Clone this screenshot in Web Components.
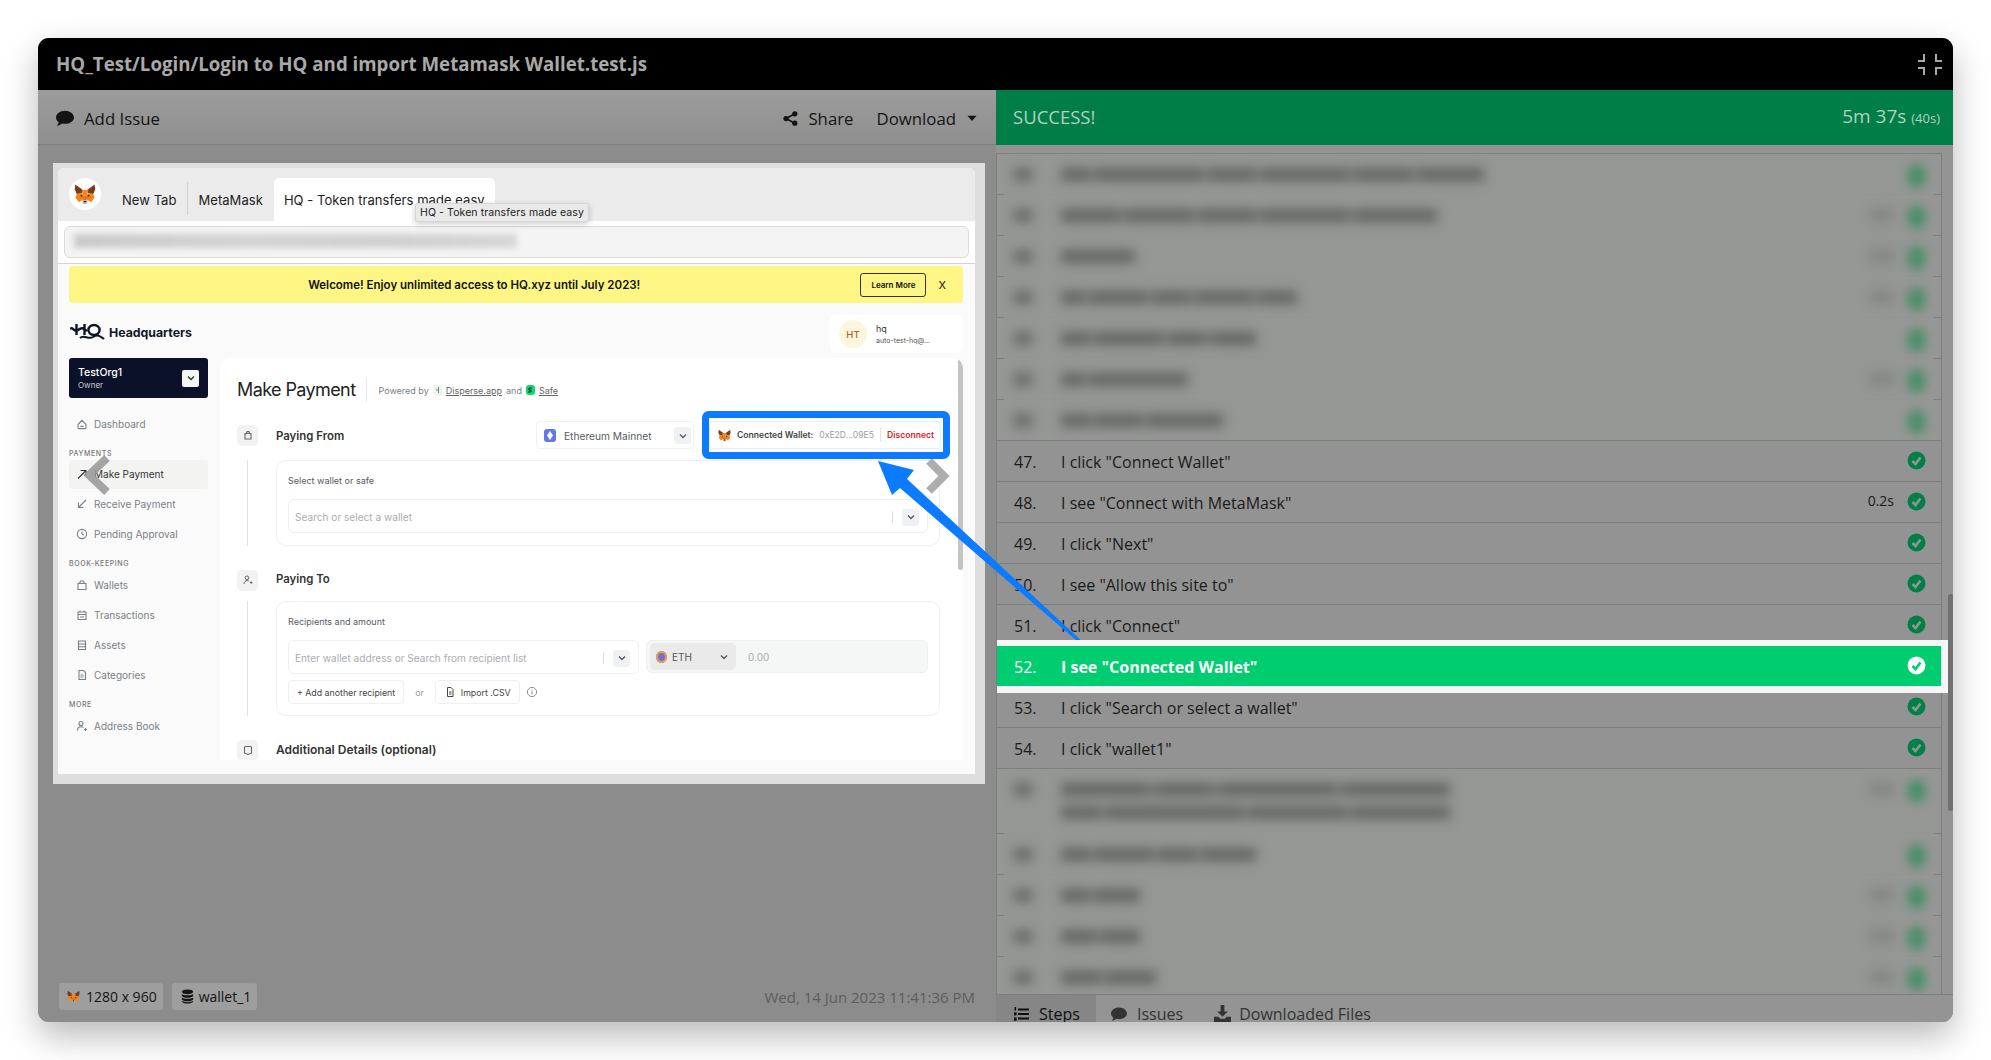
<!DOCTYPE html>
<html lang="en">
<head>
<meta charset="utf-8">
<title>HQ_Test run</title>
<style>
html, body { margin: 0; background: #fff; }
body { padding: 38px 38px 0; height: 1022px; overflow: hidden; font-family: "Open Sans", sans-serif; }
</style>
</head>
<body>
<run-window>
    <span slot="title">HQ_Test/Login/Login to HQ and import Metamask Wallet.test.js</span>
    <player-pane slot="left">
        <shot-browser>
            <hq-page></hq-page>
        </shot-browser>
    </player-pane>
    <steps-pane slot="right">
        <step-row blurred solid bars="30 110 50 90 60 68"></step-row>
        <step-row blurred bars="60 70 60 90 84" time></step-row>
        <step-row blurred bars="74" time></step-row>
        <step-row blurred bars="24 60 40 60 40" time></step-row>
        <step-row blurred bars="30 70 40 46"></step-row>
        <step-row blurred bars="24 100" time></step-row>
        <step-row blurred bars="30 50 76"></step-row>
        <step-row num="47." solid>I click "Connect Wallet"</step-row>
        <step-row num="48." solid time="0.2s">I see "Connect with MetaMask"</step-row>
        <step-row num="49." solid>I click "Next"</step-row>
        <step-row num="50." solid>I see "Allow this site to"</step-row>
        <step-row num="51." solid>I click "Connect"</step-row>
        <step-row num="52." solid current>I see "Connected Wallet"</step-row>
        <step-row num="53." solid>I click "Search or select a wallet"</step-row>
        <step-row num="54." solid>I click "wallet1"</step-row>
        <step-row blurred solid tall bars="90 60 120 110 40 140 100 100" time></step-row>
        <step-row blurred bars="30 60 40 56"></step-row>
        <step-row blurred bars="30 46" time></step-row>
        <step-row blurred bars="36 40" time></step-row>
        <step-row blurred bars="40 52" time></step-row>
    </steps-pane>
</run-window>

<script>
const ICONS = {
    comment: '<path fill="currentColor" d="M8 1.5C3.6 1.5 0 4.2 0 7.5c0 1.7.9 3.1 2.4 4.2-.2 1-.8 2.2-1.8 3 2 0 3.6-.8 4.7-1.9.8.2 1.8.4 2.7.4 4.4 0 8-2.6 8-5.7S12.4 1.5 8 1.5z"/>',
    share: '<g fill="currentColor"><circle cx="12.6" cy="3" r="2.8"/><circle cx="12.6" cy="13" r="2.8"/><circle cx="3.2" cy="8" r="2.8"/></g><path d="M12.6 3 3.2 8l9.4 5" fill="none" stroke="currentColor" stroke-width="1.8"/>',
    caret: '<path fill="currentColor" d="M2 5h12l-6 7z"/>',
    db: '<g fill="currentColor"><ellipse cx="8" cy="3" rx="6" ry="2.6"/><path d="M2 5.2c1 2 11 2 12 0v2.2c-1 2.6-11 2.6-12 0zM2 9c1 2 11 2 12 0v2.2c-1 2.6-11 2.6-12 0zM2 12.6c1 2 11 2 12 0v.6c-1 3-11 3-12 0z"/></g>',
    list: '<g fill="currentColor"><rect x="5" y="2.5" width="11" height="2"/><rect x="5" y="7" width="11" height="2"/><rect x="5" y="11.5" width="11" height="2"/><rect x="1.5" y="1" width="1.6" height="3.6"/><rect x="1" y="6.4" width="2.6" height="3"/><rect x="1" y="11.4" width="2.6" height="3.4"/></g>',
    download: '<path fill="currentColor" d="M6.2 0h3.6v6H13L8 11 3 6h3.2zM0 11h4l2 2h4l2-2h4v5H0z"/>',
    home: '<path fill="none" stroke="currentColor" stroke-width="1.1" d="M2 6.5 6 2.4l4 4.1v3.2c0 .5-.4.9-.9.9H2.900c-.5 0-.9-.4-.9-.9zM4.400 8.400h3.200"/>',
    out: '<path fill="none" stroke="currentColor" stroke-width="1.100" d="M2 10.500 10 2.500M4.500 2.500H10V8"/>',
    in: '<path fill="none" stroke="currentColor" stroke-width="1.100" d="M10 2 2.500 9.500M2.500 4.500v5H7.500"/>',
    clock: '<circle cx="6" cy="6" r="4.600" fill="none" stroke="currentColor" stroke-width="1.100"/><path d="M6 3.400V6l1.800 1.200" fill="none" stroke="currentColor" stroke-width="1.100"/>',
    wallet: '<path fill="none" stroke="currentColor" stroke-width="1.100" d="M2 4.500h8v6H2zM3.500 4.500 4.500 2h3l1 2.500"/>',
    cal: '<path fill="none" stroke="currentColor" stroke-width="1.100" d="M2 3h8v7.500H2zM2 5.500h8M4 1.500V3M8 1.500V3M4 8h4"/>',
    bank: '<path fill="none" stroke="currentColor" stroke-width="1.100" d="M2.500 2h7v8.500h-7zM2.500 5h7M2.500 7.800h7"/>',
    doc: '<path fill="none" stroke="currentColor" stroke-width="1.100" d="M3 1.500h4.500L9.500 3.500v7H3zM4.500 6h3M4.500 8h3"/>',
    book: '<circle cx="5" cy="3.500" r="2" fill="none" stroke="currentColor" stroke-width="1.100"/><path fill="none" stroke="currentColor" stroke-width="1.100" d="M1.500 10.500c0-2.500 1.500-3.800 3.500-3.800 1 0 1.800.3 2.400.8M8 9.500h3M9.500 8v3"/>',
    chev: '<path fill="none" stroke="currentColor" stroke-width="1.400" d="M3 4.500 6 7.500 9 4.500"/>',
    info: '<circle cx="6" cy="6" r="4.600" fill="none" stroke="currentColor"/><path d="M6 5.200V8.600M6 3.400v1" stroke="currentColor" fill="none"/>',
    bag: '<path fill="none" stroke="currentColor" stroke-width="1.100" d="M3 4.500h6v5.500H3zM4.500 4.500 5 2.500h2l.5 2"/>',
    user: '<circle cx="5" cy="3.800" r="1.800" fill="none" stroke="currentColor"/><path fill="none" stroke="currentColor" d="M2 10c0-2 1.300-3.400 3-3.400 1 0 1.500.3 2 .7M8 8.500h2.500M9.200 7.300v2.500"/>',
    note: '<path fill="none" stroke="currentColor" stroke-width="1.100" d="M3.500 2.500h5c.5 0 1 .4 1 1v5.500L6 10.500 2.500 9V3.500c0-.6.500-1 1-1z"/>',
    csv: '<path fill="none" stroke="currentColor" d="M3.500 1.500H7l2 2V10.500H3.500zM5 6h2.500M5 8h2.500"/>'
}

class UiIcon extends HTMLElement {
    constructor() {
        super()
        this.attachShadow({mode: 'open'})
        const size = this.getAttribute('size') || 16
        const box = this.getAttribute('box') || 16
        this.shadowRoot.innerHTML = `
        <style>
        :host { display: inline-flex; flex: none; width: ${size}px; height: ${size}px; }
        svg { display: block; width: 100%; height: 100%; }
        </style>
        <svg viewBox="0 0 ${box} ${box}">${ICONS[this.getAttribute('name')]}</svg>`
    }
}
customElements.define('ui-icon', UiIcon)

class FoxIcon extends HTMLElement {
    constructor() {
        super()
        this.attachShadow({mode: 'open'})
        const size = this.getAttribute('size') || 16
        this.shadowRoot.innerHTML = `
        <style>
        :host { display: inline-flex; flex: none; width: ${size}px; height: ${size}px; }
        svg { display: block; width: 100%; height: 100%; }
        </style>
        <svg viewBox="0 0 32 30">
            <polygon fill="#763d16" points="2,1 13,9 11,14 4,15 1,8"/>
            <polygon fill="#763d16" points="30,1 19,9 21,14 28,15 31,8"/>
            <polygon fill="#f6851b" points="11,9 21,9 19,17 13,17"/>
            <polygon fill="#f6851b" points="4,15 11,14 13,17 12,24 7,27 2,20"/>
            <polygon fill="#f6851b" points="28,15 21,14 19,17 20,24 25,27 30,20"/>
            <polygon fill="#e2761b" points="11,14 13,17 13,22 7,20"/>
            <polygon fill="#e2761b" points="21,14 19,17 19,22 25,20"/>
            <polygon fill="#233447" points="9,17 12,16 12,19"/>
            <polygon fill="#233447" points="23,17 20,16 20,19"/>
            <polygon fill="#e4761b" points="13,17 19,17 20,24 12,24"/>
            <polygon fill="#c0ad9e" points="12,24 20,24 19,29 13,29"/>
            <polygon fill="#161616" points="14,25 18,25 17,27 15,27"/>
        </svg>`
    }
}
customElements.define('fox-icon', FoxIcon)

const windowTemplate = document.createElement('template')
windowTemplate.innerHTML = `
<style>
:host { display: block; position: relative; width: 1915px; height: 984px; box-shadow: 0 14px 34px rgba(0,0,0,.28); border-radius: 11px; }
.frame { display: grid; grid-template-rows: 52px 1fr; height: 100%; border-radius: 11px; overflow: hidden; background: #8c8c8c; }
header { display: flex; align-items: center; justify-content: space-between; box-sizing: border-box; padding: 0 11px 2px 18px; background: #000; color: #a9a9a9; font: 700 18.700px "Open Sans", sans-serif; }
header svg { margin-top: 2px; }
.split { display: grid; grid-template-columns: 958px 1fr; min-height: 0; }
svg.marks { position: absolute; left: 0; top: 0; pointer-events: none; }
</style>
<div class="frame">
    <header>
        <slot name="title"></slot>
        <svg width="24" height="21" viewBox="0 0 24 21" fill="none" stroke="#a9a9a9" stroke-width="2"><path d="M6 0v7H0M18 0v7h6M6 21v-7H0M18 21v-7h6"/></svg>
    </header>
    <div class="split">
        <slot name="left"></slot>
        <slot name="right"></slot>
    </div>
</div>
<svg class="marks" width="1915" height="984" viewBox="38 38 1915 984">
    <polyline points="107,458 89,475 107,492" fill="none" stroke="#9b9b9b" stroke-width="8" opacity=".9"/>
    <polyline points="929,461 944,476 929,491" fill="none" stroke="#adadad" stroke-width="8"/>
    <rect x="705.500" y="414.500" width="241" height="41" rx="3" fill="none" stroke="#0d7bff" stroke-width="7"/>
    <polygon fill="#0d7bff" points="878,461 914,470 907,479 1086,645 1084,647 900,488 892,495"/>
</svg>
`
class RunWindow extends HTMLElement {
    constructor() {
        super()
        this.attachShadow({mode: 'open'})
        this.shadowRoot.appendChild(windowTemplate.content.cloneNode(true))
    }
}
customElements.define('run-window', RunWindow)

const playerTemplate = document.createElement('template')
playerTemplate.innerHTML = `
<style>
:host { display: flex; flex-direction: column; min-height: 0; font: 16.800px "Open Sans", sans-serif; color: #141414; background: #8c8c8c; }
.bar { flex: none; height: 55px; box-sizing: border-box; display: flex; align-items: center; padding: 2px 18px 0 18px; gap: 10px; background: linear-gradient(#9c9c9c, #8f8f8f); border-bottom: 1px solid #808080; }
.grow { flex: 1; }
.stage { flex: none; margin: 18px 11px 0 15px; }
.foot { margin-top: auto; display: flex; align-items: center; gap: 9px; padding: 0 21px 12px 21px; font-size: 14px; }
.chip { display: flex; align-items: center; gap: 6px; height: 27px; padding: 0 8px; background: #9e9e9e; border-radius: 3px; }
.chip.w { gap: 4px; padding-right: 6px; }
.chip.m { padding-right: 6px; }
.date { margin-left: auto; color: #5c5c5c; font-size: 15px; }
</style>
<div class="bar">
    <ui-icon name="comment" size="18"></ui-icon><span>Add Issue</span>
    <span class="grow"></span>
    <ui-icon name="share" size="15"></ui-icon><span>Share</span>
    <span style="width:3px"></span>
    <span>Download</span><ui-icon name="caret" size="12"></ui-icon>
</div>
<div class="stage"><slot></slot></div>
<div class="foot">
    <span class="chip m"><fox-icon size="13"></fox-icon>1280 x 960</span>
    <span class="chip w"><ui-icon name="db" size="15"></ui-icon>wallet_1</span>
    <span class="date">Wed, 14 Jun 2023 11:41:36 PM</span>
</div>
`
class PlayerPane extends HTMLElement {
    constructor() {
        super()
        this.attachShadow({mode: 'open'})
        this.shadowRoot.appendChild(playerTemplate.content.cloneNode(true))
    }
}
customElements.define('player-pane', PlayerPane)

const browserTemplate = document.createElement('template')
browserTemplate.innerHTML = `
<style>
:host { display: block; width: 932px; height: 621px; box-sizing: border-box; padding: 5px 10px 10px 5px; background: #dedede; font-family: Inter, sans-serif; color: #222; }
.inner { position: relative; height: 606px; display: flex; flex-direction: column; overflow: hidden; background: #fff; border-radius: 6px 6px 0 0; }
.tabs { flex: none; height: 53px; display: flex; align-items: flex-end; padding-left: 11px; background: #ebebeb; font-size: 13px; letter-spacing: .05px; }
.logo { align-self: flex-start; margin-top: 10px; width: 32px; height: 32px; border-radius: 50%; background: #fff; display: flex; align-items: center; justify-content: center; }
.tab { height: 43px; box-sizing: border-box; display: flex; align-items: center; padding: 0 11px; position: relative; }
.tab.first { margin-left: 10px; }
.tab + .tab::before { content: ""; position: absolute; left: 0; top: 4px; bottom: 6px; width: 1px; background: #cfcfcf; }
.tab.on { width: 221px; background: #fff; border-radius: 5px 5px 0 0; white-space: nowrap; padding-left: 10px; }
.tab.on::before { display: none; }
.url { flex: none; height: 43px; box-sizing: border-box; padding: 5px 6px; border-bottom: 1px solid #d2d2d2; }
.field { height: 32px; box-sizing: border-box; padding: 7px 9px; border: 1px solid #dcdcdc; border-radius: 6px; background: #f4f4f4; }
.smear { width: 443px; height: 14px; background: linear-gradient(90deg, #c9c9c9, #d3d3d3 40%, #cfcfcf 70%, #d6d6d6); filter: blur(3px); }
.tip { position: absolute; left: 357px; top: 35px; padding: 2px 4px; background: #e9e9e9; border: 1px solid #d6d6d6; border-radius: 2px; box-shadow: 0 2px 6px rgba(0,0,0,.2); font-size: 10.500px; letter-spacing: .1px; white-space: nowrap; }
.page { flex: 1; min-height: 0; }
</style>
<div class="inner">
    <div class="tabs">
        <span class="logo"><fox-icon size="22"></fox-icon></span>
        <span class="tab first">New Tab</span>
        <span class="tab">MetaMask</span>
        <span class="tab on">HQ - Token transfers made easy</span>
    </div>
    <div class="url"><div class="field"><div class="smear"></div></div></div>
    <div class="page"><slot></slot></div>
    <div class="tip">HQ - Token transfers made easy</div>
</div>
`
class ShotBrowser extends HTMLElement {
    constructor() {
        super()
        this.attachShadow({mode: 'open'})
        this.shadowRoot.appendChild(browserTemplate.content.cloneNode(true))
    }
}
customElements.define('shot-browser', ShotBrowser)

class NavItem extends HTMLElement {
    constructor() {
        super()
        this.attachShadow({mode: 'open'})
        const on = this.hasAttribute('active')
        this.shadowRoot.innerHTML = `
        <style>
        :host { display: flex; align-items: center; gap: 6px; box-sizing: border-box; height: ${on ? 29 : 30}px; padding: 0 0 1px 7px; font-size: 10px; color: ${on ? '#333' : '#7b7f85'}; border-radius: 4px; background: ${on ? '#f3f3f1' : 'transparent'}; }
        </style>
        <ui-icon name="${this.getAttribute('icon')}" size="12" box="12"></ui-icon><slot></slot>`
    }
}
customElements.define('nav-item', NavItem)

class PaySection extends HTMLElement {
    constructor() {
        super()
        this.attachShadow({mode: 'open'})
        const gap = this.getAttribute('gap') || 7
        const lift = Number(this.getAttribute('lift') || 0)
        const fs = this.getAttribute('fs') || 11.4
        this.shadowRoot.innerHTML = `
        <style>
        :host { display: block; margin-top: 20px; }
        .head { display: flex; align-items: center; height: 28px; }
        .badge { width: 21px; height: 21px; border-radius: 5px; background: #f2f2f2; color: #666; display: flex; align-items: center; justify-content: center; margin-right: 18px; }
        h4 { margin: ${-lift}px 0 0; font: 600 ${fs}px Inter, sans-serif; color: #333; }
        .right { margin-left: auto; display: flex; gap: 16px; align-items: center; }
        .body { display: grid; grid-template-columns: 39px 1fr; margin-top: ${gap}px; }
        .rail { width: 1px; background: #dfe2e6; margin-left: 10px; }
        </style>
        <div class="head">
            <span class="badge"><ui-icon name="${this.getAttribute('icon')}" size="12" box="12"></ui-icon></span>
            <h4>${this.getAttribute('heading')}</h4>
            <div class="right"><slot name="right"></slot></div>
        </div>
        <div class="body"><div class="rail"></div><slot></slot></div>`
    }
}
customElements.define('pay-section', PaySection)

class FormCard extends HTMLElement {
    constructor() {
        super()
        this.attachShadow({mode: 'open'})
        this.shadowRoot.innerHTML = `
        <style>
        :host { display: block; box-sizing: border-box; height: ${this.getAttribute('h')}px; padding: 14px 11px 0; border: 1px solid #eceef0; border-radius: 10px; background: #fff; }
        .label { font-size: 9px; color: #555b63; height: 12px; line-height: 12px; margin-bottom: 12px; }
        </style>
        <div class="label">${this.getAttribute('label')}</div>
        <slot></slot>`
    }
}
customElements.define('form-card', FormCard)

class PickField extends HTMLElement {
    constructor() {
        super()
        this.attachShadow({mode: 'open'})
        this.shadowRoot.innerHTML = `
        <style>
        :host { display: flex; align-items: center; box-sizing: border-box; height: 34px; padding: 2px 8px 0 6px; border: 1px solid #edeff1; border-radius: 6px; font-size: 10.100px; color: #a9adb2; white-space: nowrap; }
        .grow { flex: 1; }
        .sep { width: 1px; height: 12px; background: #dcdee0; margin-right: 9px; }
        .btn { width: 17px; height: 17px; border-radius: 3px; background: #f0f1f4; color: #555b6b; display: flex; align-items: center; justify-content: center; }
        </style>
        <slot></slot><span class="grow"></span><span class="sep"></span>
        <span class="btn"><ui-icon name="chev" size="12" box="12"></ui-icon></span>`
    }
}
customElements.define('pick-field', PickField)

const pageTemplate = document.createElement('template')
pageTemplate.innerHTML = `
<style>
:host { display: block; height: 100%; box-sizing: border-box; padding: 2px 12px 0 11px; background: #fafafa; font-family: Inter, sans-serif; color: #222; overflow: hidden; }
.banner { height: 37px; display: flex; align-items: center; background: #fdf685; border-radius: 4px; font-size: 11.500px; font-weight: 600; color: #111; padding-right: 9px; }
.banner b { flex: 1; text-align: center; font-weight: 600; padding-left: 19px; }
.more { width: 66px; height: 24px; box-sizing: border-box; border: 1px solid #333; border-radius: 3px; display: flex; align-items: center; justify-content: center; font-size: 8px; }
.x { margin: 0 8px 0 12px; font-size: 11px; font-weight: 400; }
.top { display: flex; justify-content: space-between; align-items: center; height: 38px; margin-top: 12px; margin-bottom: 5px; }
.brand { display: flex; align-items: center; gap: 4px; margin: -4px 0 0 1px; font-size: 12.300px; font-weight: 700; color: #111827; }
.user { width: 133px; height: 38px; box-sizing: border-box; padding-left: 9px; background: #fff; border-radius: 6px; display: flex; align-items: center; gap: 9px; }
.avatar { width: 28px; height: 28px; border-radius: 50%; background: #fdf5e0; color: #a86a1e; font-size: 9.500px; display: flex; align-items: center; justify-content: center; font-weight: 500; }
.user p { margin: 2px 0 0; font-size: 9px; color: #333; line-height: 12px; }
.user small { display: block; font-size: 7px; color: #555; }
.body { display: grid; grid-template-columns: 139px 1fr; gap: 12px; }
.org { height: 40px; box-sizing: border-box; padding: 0 9px; background: #0a1128; border-radius: 3px; display: flex; align-items: center; justify-content: space-between; color: #fff; margin-bottom: 11px; }
.org p { margin: 1px 0 0; font-size: 10.500px; line-height: 13px; font-weight: 500; }
.org small { display: block; font-size: 8px; color: #c9ccd3; font-weight: 400; }
.org span { width: 17px; height: 17px; background: #f5f5f5; border-radius: 2px; color: #333; display: flex; align-items: center; justify-content: center; }
.sec { height: 12px; line-height: 12px; margin-top: 9px; font-size: 7px; font-weight: 500; letter-spacing: .6px; color: #777; }
.main { position: relative; height: 402px; box-sizing: border-box; padding: 0 23px 0 17px; background: #fff; border-radius: 10px 10px 0 0; overflow: hidden; }
.scroll { position: absolute; right: 0; top: 0; width: 5px; height: 212px; border-radius: 3px; background: #c4c4c4; }
.title { display: flex; align-items: center; height: 24px; margin-top: 20px; margin-bottom: -1px; font-size: 9px; color: #7b7f85; white-space: nowrap; }
h2 { margin: 0; font-size: 18px; font-weight: 400; letter-spacing: -.6px; color: #222; padding-right: 11px; margin-right: 11px; border-right: 1px solid #e8e8e8; line-height: 24px; }
.title u { color: #666; margin: 0 4px; }
.dot { width: 9px; height: 10px; border-radius: 2px; margin-left: 4px; display: flex; align-items: center; justify-content: center; }
.dot svg { display: block; }
.net { width: 158px; height: 28px; box-sizing: border-box; display: flex; align-items: center; padding: 1px 2px 0 7px; gap: 8px; border: 1px solid #f1f1f1; border-radius: 4px; font-size: 10.200px; color: #555b63; white-space: nowrap; }
.eth { width: 12px; height: 13px; border-radius: 3px; background: #6179e6; display: flex; align-items: center; justify-content: center; }
.net i { margin-left: auto; width: 17px; height: 17px; border-radius: 3px; background: #f0f1f4; color: #555b6b; display: flex; align-items: center; justify-content: center; }
.wallet { width: 230px; height: 26px; box-sizing: border-box; display: flex; align-items: center; gap: 6px; padding: 0 5px 0 8px; border-radius: 3px; background: #fff; box-shadow: 0 0 0 1px #ebecf0; font-size: 8.600px; white-space: nowrap; font-weight: 600; color: #444; }
.wallet em { font-style: normal; font-weight: 400; color: #9a9ea5; }
.wallet s { width: 1px; height: 14px; background: #e2e2e2; }
.wallet b { color: #d21f2f; font-weight: 600; }
.row { display: flex; gap: 7px; }
.row pick-field { width: 351px; flex: none; }
.amount { flex: 1; height: 33px; box-sizing: border-box; display: flex; align-items: center; gap: 12px; background: #f5f6f6; border: 1px solid #eef0f1; border-radius: 6px; padding-left: 3px; font-size: 10px; color: #a9adb2; }
.coin { width: 86px; height: 27px; display: flex; align-items: center; gap: 5px; padding: 0 6px; box-sizing: border-box; background: #eaeaea; border-radius: 5px; color: #555; }
.coin span { width: 11px; height: 12px; border-radius: 50%; background: #7a6be0; box-shadow: inset 0 0 0 2px #e3a63a; }
.coin ui-icon { margin-left: auto; }
.actions { display: flex; align-items: center; margin-top: 6px; font-size: 8.800px; color: #444; }
.act { display: flex; align-items: center; gap: 5px; height: 24px; box-sizing: border-box; padding: 0 8px; border: 1px solid #edeff1; border-radius: 4px; white-space: nowrap; }
.or { margin: 0 11px; color: #999; }
.info { margin-left: 6px; color: #8a8f9a; }
</style>
<div class="banner"><b>Welcome! Enjoy unlimited access to HQ.xyz until July 2023!</b><span class="more">Learn More</span><span class="x">X</span></div>
<div class="top">
    <div class="brand">
        <svg width="35" height="18" viewBox="0 0 35 18" fill="none" stroke="#0e1424" stroke-width="2.400"><path d="M0 6C3 3 4 10 8 7s5-2 9 1M6.500 1v11M14.500 1v11"/><ellipse cx="24" cy="7" rx="5.600" ry="5"/><path d="M10 15c4-4 8 2 13-1s7-1 11 2" stroke-width="2"/></svg>
        Headquarters
    </div>
    <div class="user"><span class="avatar">HT</span><p>hq<small>auto-test-hq@...</small></p></div>
</div>
<div class="body">
    <aside>
        <div class="org"><p>TestOrg1<small>Owner</small></p><span><ui-icon name="chev" size="12" box="12"></ui-icon></span></div>
        <nav-item icon="home">Dashboard</nav-item>
        <div class="sec">PAYMENTS</div>
        <nav-item icon="out" active>Make Payment</nav-item>
        <nav-item icon="in">Receive Payment</nav-item>
        <nav-item icon="clock">Pending Approval</nav-item>
        <div class="sec">BOOK-KEEPING</div>
        <nav-item icon="wallet">Wallets</nav-item>
        <nav-item icon="cal">Transactions</nav-item>
        <nav-item icon="bank">Assets</nav-item>
        <nav-item icon="doc">Categories</nav-item>
        <div class="sec">MORE</div>
        <nav-item icon="book">Address Book</nav-item>
    </aside>
    <section class="main">
        <div class="scroll"></div>
        <div class="title"><h2>Make Payment</h2>Powered by<span class="dot" style="background:#f0f4f0"><svg width="5" height="6" viewBox="0 0 5 6"><path d="M3.500 0v6M1 3h2.500" stroke="#4a9a7a" fill="none"/></svg></span><u>Disperse.app</u>and<span class="dot" style="background:#12d86c;border-radius:3px"><svg width="6" height="6" viewBox="0 0 6 6"><path d="M5 1H2v2h2v2H1" stroke="#123" fill="none"/></svg></span><u>Safe</u></div>
        <pay-section heading="Paying From" icon="bag" gap="11" lift="-1">
            <div slot="right" class="right">
                <div class="net"><span class="eth"><svg width="6" height="9" viewBox="0 0 6 9"><path d="M3 0 6 4.500 3 9 0 4.500z" fill="#fff"/></svg></span>Ethereum Mainnet<i><ui-icon name="chev" size="12" box="12"></ui-icon></i></div>
            </div>
            <div slot="right" class="wallet"><fox-icon size="13"></fox-icon>Connected Wallet: <em>0xE2D...09E5</em><s></s><b>Disconnect</b></div>
            <form-card label="Select wallet or safe" h="86"><pick-field>Search or select a wallet</pick-field></form-card>
        </pay-section>
        <pay-section heading="Paying To" icon="user" lift="3">
            <form-card label="Recipients and amount" h="115">
                <div class="row">
                    <pick-field>Enter wallet address or Search from recipient list</pick-field>
                    <div class="amount"><span class="coin"><span></span>ETH<ui-icon name="chev" size="12" box="12"></ui-icon></span>0.00</div>
                </div>
                <div class="actions">
                    <span class="act">+ Add another recipient</span><span class="or">or</span>
                    <span class="act"><ui-icon name="csv" size="12" box="12"></ui-icon>Import .CSV</span>
                    <ui-icon class="info" name="info" size="12" box="12"></ui-icon>
                </div>
            </form-card>
        </pay-section>
        <pay-section heading="Additional Details (optional)" icon="note" lift="1" fs="12"></pay-section>
    </section>
</div>
`
class HqPage extends HTMLElement {
    constructor() {
        super()
        this.attachShadow({mode: 'open'})
        this.shadowRoot.appendChild(pageTemplate.content.cloneNode(true))
    }
}
customElements.define('hq-page', HqPage)

class StepRow extends HTMLElement {
    constructor() {
        super()
        this.attachShadow({mode: 'open'})
        const blurred = this.hasAttribute('blurred')
        const current = this.hasAttribute('current')
        const solid = this.hasAttribute('solid')
        const tall = this.hasAttribute('tall')
        const time = this.getAttribute('time')
        const line = '#7d7e7d'
        const edge = solid
            ? `border-top: 1px solid ${line};`
            : `border-top: 1px solid; border-image: linear-gradient(to right, ${line} 8px, transparent 8px, transparent calc(100% - 8px), ${line} calc(100% - 8px)) 1;`
        const bars = (this.getAttribute('bars') || '').split(' ').filter(Boolean)
            .map(w => `<i style="width:${w}px"></i>`).join('')
        const tick = current ? '#00cd6f' : '#939593'
        const disc = current ? '#fff' : '#017f48'
        const mark = blurred
            ? '<span class="blob"></span>'
            : `<svg class="check" width="19" height="19" viewBox="0 0 19 19"><circle cx="9.500" cy="9.500" r="9" fill="${disc}"/><path d="M5.500 10l3 3 5-6.500" fill="none" stroke="${tick}" stroke-width="2.600"/></svg>`
        let stamp = ''
        if (blurred && time !== null) stamp = '<span class="ghost"></span>'
        if (!blurred && time) stamp = `<span class="time">${time}</span>`
        this.shadowRoot.innerHTML = `
        <style>
        :host { display: block; position: relative; height: ${tall ? 65 : 41}px; box-sizing: border-box; ${edge} background: ${blurred ? '#959795' : '#929392'}; color: #1b1b1b; font-size: 16px; }
        :host([current]) { z-index: 1; border-color: transparent; background: #00cd6f; color: #fff; font-weight: 700; }
        :host([current])::before { content: ""; position: absolute; z-index: -1; left: 0; right: -10px; top: -6px; bottom: -7px; background: #f6f6f6; }
        .in { display: flex; align-items: flex-start; box-sizing: border-box; height: 100%; padding: 10px 15px 0 17px; background: inherit; }
        .num { width: 47px; flex: none; line-height: 22px; }
        :host([current]) .num { font-weight: 400; }
        .text { flex: 1; line-height: 22px; }
        .time { font-size: 14px; font-weight: 400; margin-right: 13px; line-height: 18px; }
        .check { display: block; }
        .words { flex: none; display: flex; flex-wrap: ${tall ? 'wrap' : 'nowrap'}; gap: 10px 3px; width: ${tall ? '400px' : 'auto'}; filter: blur(6px); padding-top: 4px; }
        .words i { display: block; height: 13px; background: rgba(58,60,58,.55); }
        .mute { width: 18px; height: 13px; margin: 4px 29px 0 0; flex: none; background: rgba(58,60,58,.5); filter: blur(6px); }
        .spacer { flex: 1; }
        .ghost { width: 24px; height: 12px; margin: 4px 13px 0 0; background: rgba(58,60,58,.2); filter: blur(6px); }
        .blob { width: 19px; height: 24px; border-radius: 9px; background: #3f8d62; filter: blur(5px); opacity: .8; }
        </style>
        <div class="in">
        ${blurred
            ? `<span class="mute"></span><div class="words">${bars}</div><span class="spacer"></span>`
            : `<span class="num">${this.getAttribute('num')}</span><span class="text"><slot></slot></span>`}
        ${stamp}${mark}
        </div>`
    }
}
customElements.define('step-row', StepRow)

const stepsTemplate = document.createElement('template')
stepsTemplate.innerHTML = `
<style>
:host { display: flex; flex-direction: column; min-height: 0; min-width: 0; position: relative; background: #929392; font-family: "Open Sans", sans-serif; }
.top { flex: none; height: 55px; box-sizing: border-box; display: flex; align-items: center; justify-content: space-between; padding: 0 13px 3px 17px; background: #007e48; color: #b4d0c0; font-size: 18.500px; }
.top b { font-weight: 400; font-size: 19px; }
.top small { font-size: 13px; }
.track { flex: none; padding: 8px 11px 0 0; height: 849px; box-sizing: border-box; background: #939493; overflow: hidden; }
.list { height: 100%; border-right: 1px solid #7d7e7d; border-left: 1px solid #7d7e7d; position: relative; }
.thumb { position: absolute; right: 0; top: 504px; width: 5px; height: 217px; background: #717171; border-radius: 3px; z-index: 2; }
.tabs { flex: none; height: 28px; display: flex; align-items: flex-start; background: #949494; border-top: 1px solid #7d7e7d; font-size: 16px; color: #333; overflow: hidden; }
.tab { height: 28px; display: flex; align-items: center; gap: 10px; padding: 9px 0 0 17px; box-sizing: border-box; }
.tab.on { width: 100px; background: #868686; color: #111; }
.tab.b { padding-left: 15px; }
.tab.c { padding-left: 31px; gap: 8px; }
</style>
<div class="top"><span>SUCCESS!</span><b>5m 37s <small>(40s)</small></b></div>
<div class="track"><div class="list"><slot></slot></div></div>
<div class="thumb"></div>
<div class="tabs">
    <span class="tab on"><ui-icon name="list" size="16"></ui-icon>Steps</span>
    <span class="tab b"><ui-icon name="comment" size="16"></ui-icon>Issues</span>
    <span class="tab c"><ui-icon name="download" size="17"></ui-icon>Downloaded Files</span>
</div>
`
class StepsPane extends HTMLElement {
    constructor() {
        super()
        this.attachShadow({mode: 'open'})
        this.shadowRoot.appendChild(stepsTemplate.content.cloneNode(true))
    }
}
customElements.define('steps-pane', StepsPane)
</script>
</body>
</html>
